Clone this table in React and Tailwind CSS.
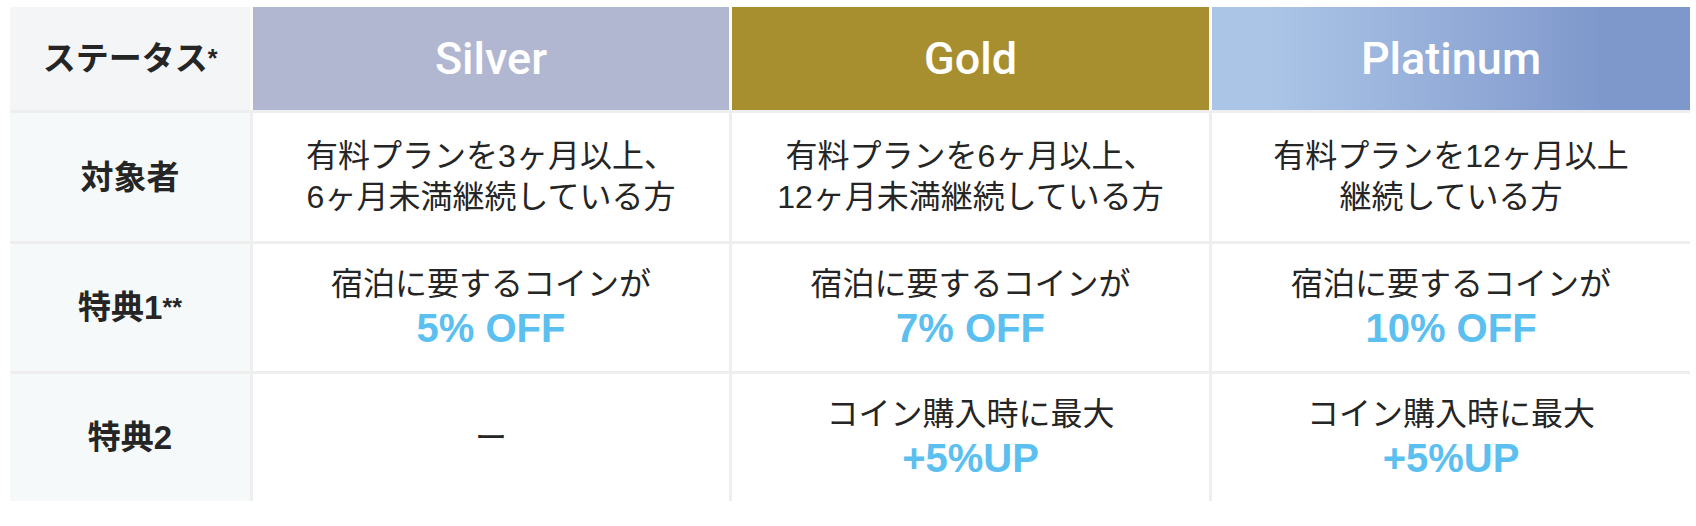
import React from 'react';

const font = "font-['Liberation_Sans','Noto_Sans_CJK_JP',sans-serif]";

const tiers = [
  { name: 'Silver', bg: 'bg-[#b1b6d1]' },
  { name: 'Gold', bg: 'bg-[#a78f2f]' },
  { name: 'Platinum', bg: 'bg-[linear-gradient(90deg,#abc5e7_12%,#7f98cc_82%)]' },
];

const rows = [
  {
    label: '対象者',
    height: 'h-[128px]',
    cells: [
      ['有料プランを3ヶ月以上、', '6ヶ月未満継続している方'],
      ['有料プランを6ヶ月以上、', '12ヶ月未満継続している方'],
      ['有料プランを12ヶ月以上', '継続している方'],
    ],
  },
  {
    label: '特典1',
    mark: '**',
    height: 'h-[127px]',
    perks: [
      { text: '宿泊に要するコインが', value: '5% OFF' },
      { text: '宿泊に要するコインが', value: '7% OFF' },
      { text: '宿泊に要するコインが', value: '10% OFF' },
    ],
  },
  {
    label: '特典2',
    height: 'h-[127px]',
    perks: [
      null,
      { text: 'コイン購入時に最大', value: '+5%UP' },
      { text: 'コイン購入時に最大', value: '+5%UP' },
    ],
  },
];

const Cell = ({ children, className = '' }) => (
  <div className={`flex flex-col items-center justify-center text-center ${className}`}>{children}</div>
);

const Mark = ({ children }) => (
  <sup className="relative -top-[3px] text-[25px] font-bold">{children}</sup>
);

const App = () => {
  return (
    <div className={`min-h-[526px] bg-white pl-[10px] pt-[7px] text-[#252525] ${font}`}>
      <div className="flex w-[1680px] flex-col gap-[3px] bg-[#eeeeee]">
        {/* Header */}
        <div className="grid h-[103px] grid-cols-[240px_476px_477px_478px] gap-[3px] bg-[#fbfbfc]">
          <Cell className="bg-[#f4f5f7]">
            <span className="text-[33px] font-bold leading-none">
              ステータス<Mark>*</Mark>
            </span>
          </Cell>
          {tiers.map((tier) => (
            <Cell key={tier.name} className={tier.bg}>
              <span className="font-['Roboto',sans-serif] text-[45px] font-medium leading-none text-white">
                {tier.name}
              </span>
            </Cell>
          ))}
        </div>

        {/* Body rows */}
        {rows.map((row) => (
          <div
            key={row.label}
            className={`grid grid-cols-[240px_476px_477px_478px] gap-[3px] ${row.height}`}
          >
            <Cell className="bg-[#f6f9fa]">
              <span className="text-[33px] font-bold leading-none">
                {row.label}
                {row.mark && <Mark>{row.mark}</Mark>}
              </span>
            </Cell>

            {row.cells &&
              row.cells.map((lines, i) => (
                <Cell key={i} className="bg-white">
                  {lines.map((line) => (
                    <div key={line} className="text-[32px] leading-[41px]">
                      {line}
                    </div>
                  ))}
                </Cell>
              ))}

            {row.perks &&
              row.perks.map((perk, i) => (
                <Cell key={i} className="bg-white">
                  {perk ? (
                    <>
                      <div className="text-[32px] leading-[40px]">{perk.text}</div>
                      <div className="text-[40px] font-bold leading-[48px] text-[#5bc0f0]">{perk.value}</div>
                    </>
                  ) : (
                    <div className="text-[32px] leading-none">ー</div>
                  )}
                </Cell>
              ))}
          </div>
        ))}
      </div>
    </div>
  );
};

export default App;
